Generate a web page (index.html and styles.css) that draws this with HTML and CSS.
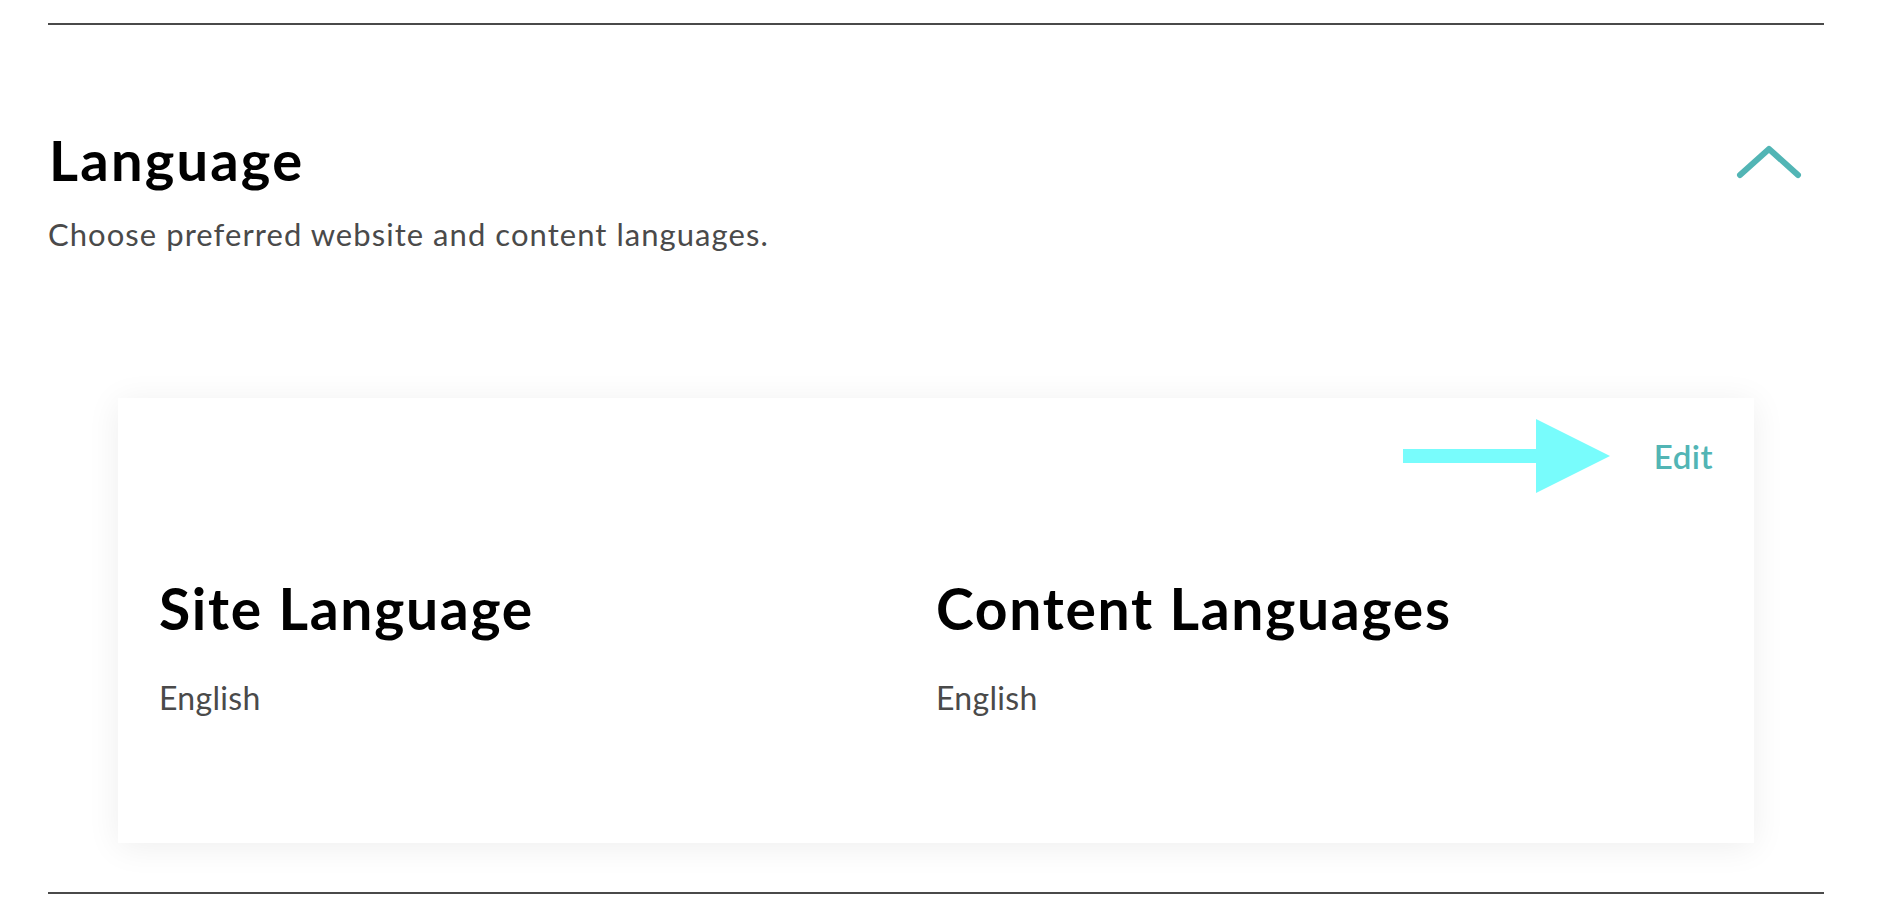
FILE: index.html
```html
<!DOCTYPE html>
<html lang="en">
<head>
<meta charset="utf-8">
<title>Language</title>
<link rel="stylesheet" href="styles.css">
</head>
<body>
<div class="page">
  <hr class="rule rule-top">
  <section class="section">
    <div class="section-head">
      <div class="section-text">
        <h2 class="section-title">Language</h2>
        <p class="section-sub">Choose preferred website and content languages.</p>
      </div>
      <button class="toggle" aria-label="Collapse">
        <svg class="chevron" width="70" height="40" viewBox="0 0 70 40">
          <path d="M6 33 L35 7 L64 33" fill="none" stroke="#52b5b5" stroke-width="6" stroke-linecap="round" stroke-linejoin="round"/>
        </svg>
      </button>
    </div>
    <div class="card">
      <div class="card-head">
        <svg class="arrow" width="207" height="74" viewBox="0 0 207 74">
          <rect x="0" y="30" width="136" height="14" fill="#78fcfc"/>
          <polygon points="133,0 207,37 133,74" fill="#78fcfc"/>
        </svg>
        <a class="edit" href="#">Edit</a>
      </div>
      <div class="card-cols">
        <div class="col">
          <h3 class="col-title">Site Language</h3>
          <p class="col-value">English</p>
        </div>
        <div class="col">
          <h3 class="col-title">Content Languages</h3>
          <p class="col-value">English</p>
        </div>
      </div>
    </div>
  </section>
  <hr class="rule rule-bottom">
</div>
</body>
</html>
```
FILE: styles.css
```css
* { box-sizing: border-box; }
html, body { margin: 0; padding: 0; background: #fff; }
body { font-family: Lato, "Noto Sans", sans-serif; color: #000; }

.page {
  padding: 23px 62px 0 48px;
}

.rule {
  margin: 0;
  border: 0;
  height: 2px;
  background: #4a4a4a;
}

.section {
  padding-top: 107px;
}

.section-head {
  display: flex;
  justify-content: space-between;
  align-items: flex-start;
}

.section-title {
  margin: 0 0 0 1px;
  font-size: 56px;
  line-height: 56px;
  font-weight: 700;
  letter-spacing: 2.2px;
  color: #000;
}

.section-sub {
  margin: 31px 0 0 0;
  font-size: 31px;
  line-height: 31px;
  font-weight: 400;
  letter-spacing: 1.05px;
  color: #4a4a4a;
}

.toggle {
  margin: 10px 20px 0 0;
  padding: 0;
  border: 0;
  background: none;
  display: block;
  cursor: pointer;
}
.chevron { display: block; }

.card {
  margin: 148px 70px 0 70px;
  background: #fff;
  box-shadow: 0 4px 32px rgba(0, 0, 0, 0.07);
  padding: 21px 41px 129px 41px;
}

.card-head {
  display: flex;
  justify-content: flex-end;
  align-items: center;
  gap: 44px;
  height: 74px;
}
.arrow { display: block; }

.edit {
  font-size: 33px;
  line-height: 33px;
  font-weight: 600;
  letter-spacing: 0.5px;
  color: #52b5b5;
  text-decoration: none;
}

.card-cols {
  display: grid;
  grid-template-columns: 1fr 1fr;
  margin-top: 87px;
}

.col-title {
  margin: 0;
  font-size: 57px;
  line-height: 57px;
  font-weight: 700;
  letter-spacing: 1.7px;
  color: #000;
}

.col-value {
  margin: 45px 0 0 0;
  font-size: 32px;
  line-height: 32px;
  font-weight: 400;
  letter-spacing: 0.3px;
  color: #4a4a4a;
}

.rule-bottom {
  margin-top: 49px;
}
```
